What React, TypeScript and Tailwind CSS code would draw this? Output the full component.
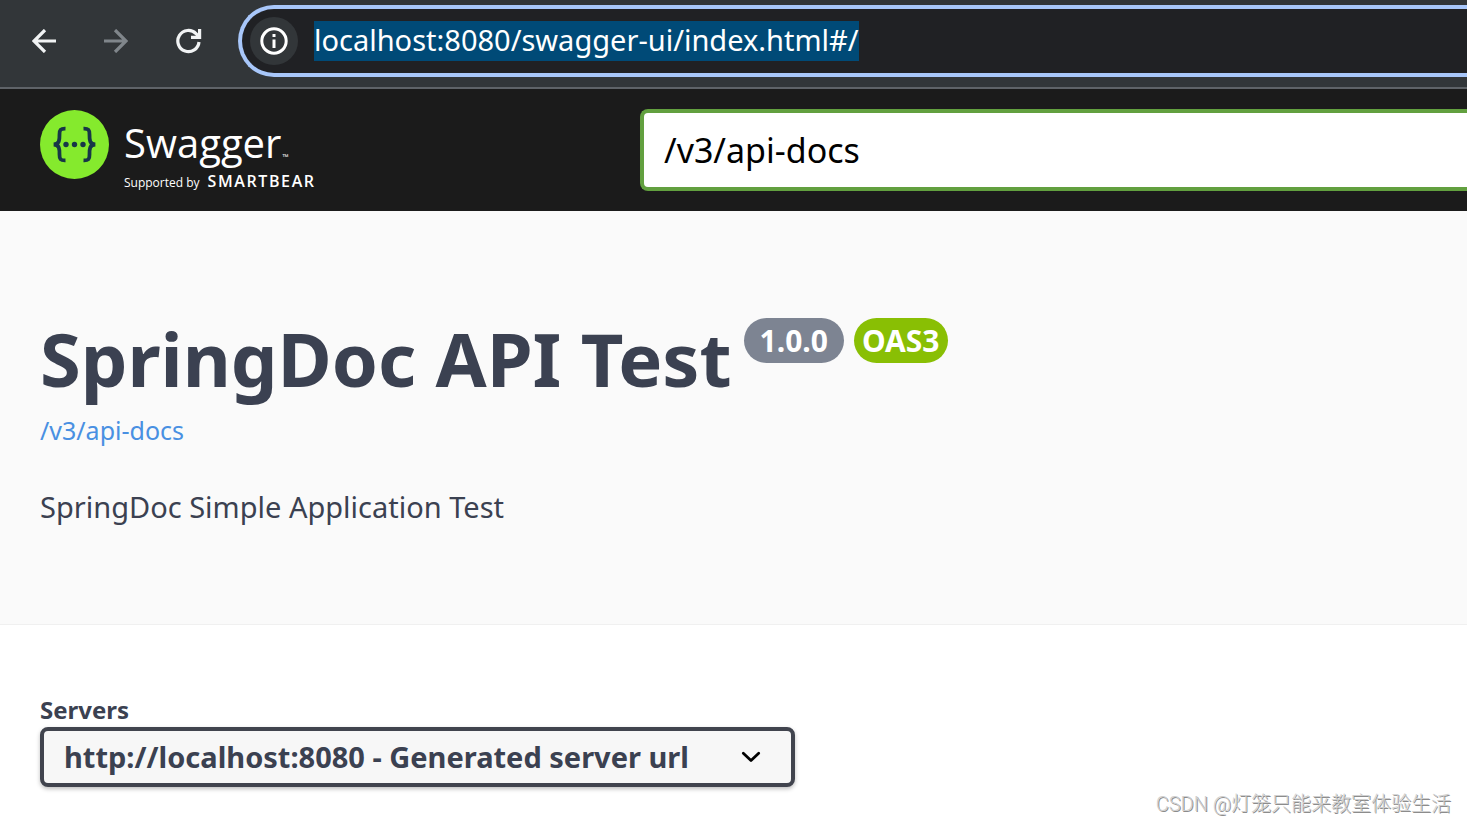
import { useState } from "react";

const servers = ["http://localhost:8080 - Generated server url"];

function BackIcon({ className }: { className?: string }) {
  return (
    <svg viewBox="0 0 24 24" className={className} fill="none" stroke="currentColor" strokeWidth="3.2">
      <path d="M24 12H2.2M13 1L2 12L13 23" />
    </svg>
  );
}

function ReloadIcon({ className }: { className?: string }) {
  return (
    <svg viewBox="0 0 26 26" className={className} fill="none" stroke="currentColor" strokeWidth="3.2">
      <path d="M23 14A10.6 10.6 0 1 1 20 5.6L23 8.6" />
      <path d="M23.6 1V9.4H15" />
    </svg>
  );
}

function InfoIcon({ className }: { className?: string }) {
  return (
    <svg viewBox="0 0 28 28" className={className} fill="none" stroke="currentColor">
      <circle cx="14" cy="14" r="12.2" strokeWidth="3" />
      <path d="M14 12.5V21" strokeWidth="3" />
      <path d="M14 7V10" strokeWidth="3" />
    </svg>
  );
}

function BracesMark({ className }: { className?: string }) {
  return (
    <svg viewBox="0 0 69 69" className={className}>
      <circle cx="34.5" cy="34.5" r="34.5" fill="#85ea2d" />
      <g fill="none" stroke="#173647" strokeWidth="3.8">
        <path d="M25.5 18.6C20.5 18.4 19.4 20 19.5 24.5C19.6 30 19.4 34.5 13.6 34.5C19.4 34.5 19.6 39 19.5 44.5C19.4 49 20.5 50.6 25.5 50.4" />
        <path d="M43.5 18.6C48.5 18.4 49.6 20 49.5 24.5C49.4 30 49.6 34.5 55.4 34.5C49.6 34.5 49.4 39 49.5 44.5C49.6 49 48.5 50.6 43.5 50.4" />
      </g>
      <g fill="#173647">
        <circle cx="26" cy="34.5" r="2.7" />
        <circle cx="34.5" cy="34.5" r="2.7" />
        <circle cx="43" cy="34.5" r="2.7" />
      </g>
    </svg>
  );
}

function BrowserBar() {
  const [address, setAddress] = useState("localhost:8080/swagger-ui/index.html#/");

  return (
    <div className="flex items-start bg-[#323639] border-b-2 border-[#5f6368] pt-[5px] pb-[10px] pl-8">
      <div className="flex items-center h-[72px] w-[206px] shrink-0 gap-12">
        <button type="button" aria-label="Back" className="text-[#f1f3f4]">
          <BackIcon className="size-6" />
        </button>
        <button type="button" aria-label="Forward" className="text-[#80868b]" disabled>
          <BackIcon className="size-6 rotate-180" />
        </button>
        <button type="button" aria-label="Reload" className="text-[#f1f3f4]">
          <ReloadIcon className="size-[26px]" />
        </button>
      </div>
      <div className="flex flex-1 items-center gap-4 h-[72px] pl-2 rounded-l-full border-4 border-r-0 border-[#a8c7fa] bg-[#202124]">
        <button
          type="button"
          aria-label="View site information"
          className="flex items-center justify-center size-12 rounded-full bg-[#323639] text-white"
        >
          <InfoIcon className="size-7" />
        </button>
        <input
          type="text"
          aria-label="Address"
          value={address}
          onChange={(e) => setAddress(e.target.value)}
          className="field-sizing-content h-10 pb-[2px] bg-[#004a77] text-white text-[29px] outline-none"
        />
      </div>
    </div>
  );
}

function Topbar() {
  const [spec, setSpec] = useState("/v3/api-docs");

  return (
    <header className="flex items-start bg-[#1b1b1b] py-5 pl-10">
      <a href="#/" className="flex w-[600px] shrink-0 gap-[15px] pt-px text-white">
        <BracesMark className="size-[69px]" />
        <span className="flex flex-col gap-1 pt-[7px] font-['Open_Sans']">
          <span className="flex items-end gap-px text-[40px] leading-[52px]">
            Swagger
            <span className="text-[8px] leading-6">™</span>
          </span>
          <span className="flex items-baseline gap-2 text-[12px] leading-4">
            Supported by
            <span className="font-semibold text-[16px] tracking-widest">SMARTBEAR</span>
          </span>
        </span>
      </a>
      <input
        type="text"
        aria-label="API definition"
        value={spec}
        onChange={(e) => setSpec(e.target.value)}
        className="flex-1 min-w-0 h-[82px] pl-5 rounded-l-lg border-4 border-r-0 border-[#62a03f] bg-white text-black text-[34px] outline-none"
      />
    </header>
  );
}

function Info() {
  return (
    <section className="bg-[#fafafa] border-b border-[#f0f0f0] px-10 pt-[99px] pb-[95px]">
      <div className="flex items-start">
        <h1 className="text-[74px] leading-[98px] font-bold">SpringDoc API Test</h1>
        <span className="flex gap-[10px] pt-2 pl-3 text-[30px] leading-[45px] font-bold text-white">
          <span className="px-4 rounded-full bg-[#7d8492]">1.0.0</span>
          <span className="px-2 rounded-full bg-[#89bf04]">OAS3</span>
        </span>
      </div>
      <a href="/v3/api-docs" className="block w-fit text-[25px] leading-[44px] text-[#4990e2]">
        /v3/api-docs
      </a>
      <p className="pt-[33px] text-[29px] leading-[44px]">SpringDoc Simple Application Test</p>
    </section>
  );
}

function Servers() {
  const [server, setServer] = useState(servers[0]);

  return (
    <section className="px-10 pt-[69px] pb-9">
      <label htmlFor="servers" className="block mb-px text-[24px] leading-8 font-bold">
        Servers
      </label>
      <div className="relative w-fit">
        <select
          id="servers"
          value={server}
          onChange={(e) => setServer(e.target.value)}
          className="appearance-none block w-[755px] h-[60px] pl-5 pr-20 rounded-lg border-4 border-[#41444e] bg-[#f7f7f7] text-[29px] font-bold shadow-[0_2px_4px_rgba(0,0,0,0.25)]"
        >
          {servers.map((s) => (
            <option key={s}>{s}</option>
          ))}
        </select>
        <svg
          viewBox="0 0 20 12"
          className="pointer-events-none absolute right-[34px] top-6 w-5 h-3"
          fill="none"
          stroke="#000"
          strokeWidth="2.8"
          strokeLinecap="round"
          strokeLinejoin="round"
        >
          <path d="M2.3 2.3L10 9.6L17.7 2.3" />
        </svg>
      </div>
    </section>
  );
}

export default function App() {
  return (
    <div className="relative min-h-screen overflow-hidden bg-white font-['Noto_Sans','Noto_Sans_CJK_SC',sans-serif] text-[#3b4151]">
      <BrowserBar />
      <Topbar />
      <main>
        <Info />
        <Servers />
      </main>
      <p className="absolute right-4 bottom-1 font-['Roboto','Noto_Sans_CJK_SC',sans-serif] font-light text-[20px] leading-[30px] text-[#d0d0d0] [text-shadow:1px_1px_0_#8c8c8c]">
        CSDN @灯笼只能来教室体验生活
      </p>
    </div>
  );
}
